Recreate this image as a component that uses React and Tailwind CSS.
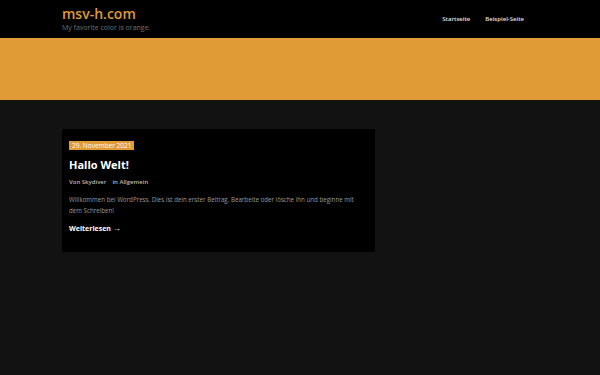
export default function App() {
  return (
    <div className="min-h-[375px] w-[600px] bg-[#121212] leading-none" style={{ fontFamily: '"Open Sans", sans-serif' }}>
      <header className="h-[38px] bg-black flex items-start justify-between pl-[62px] pr-[76px]">
        <div className="pt-[5px]">
          <div className="text-[14px] leading-[18px] font-semibold text-[#e09a36]">msv-h.com</div>
          <div className="text-[7px] leading-[9px] text-[#707070]">My favorite color is orange.</div>
        </div>
        <nav className="flex gap-[15px] pt-[15px] text-[6px] leading-[8px] font-semibold text-[#e0e0e0]">
          <span>Startseite</span>
          <span>Beispiel-Seite</span>
        </nav>
      </header>
      <div className="h-[62px] bg-[#e09a36]"></div>
      <main className="pt-[29px] pl-[62px]">
        <article className="w-[313px] h-[123px] bg-black px-[7px] pt-[12px]">
          <div className="w-fit bg-[#e09a36] text-white text-[6.5px] leading-[9px] px-[3px]">29. November 2021</div>
          <h2 className="mt-[8px] text-[11px] leading-[14px] font-bold text-white">Hallo Welt!</h2>
          <div className="mt-[6px] text-[6px] leading-[8px] font-semibold text-[#b8b8b8]">
            <span>Von Skydiver</span>
            <span className="ml-[6px]">in Allgemein</span>
          </div>
          <p className="mt-[8px] text-[6.2px] leading-[11px] text-[#9a9a9a] pr-[10px]">
            Willkommen bei WordPress. Dies ist dein erster Beitrag. Bearbeite oder lösche ihn und beginne mit dem Schreiben!
          </p>
          <div className="mt-[7px] text-[7px] leading-[9px] font-bold text-white">Weiterlesen <span className="text-[8px]">→</span></div>
        </article>
      </main>
    </div>
  );
}
